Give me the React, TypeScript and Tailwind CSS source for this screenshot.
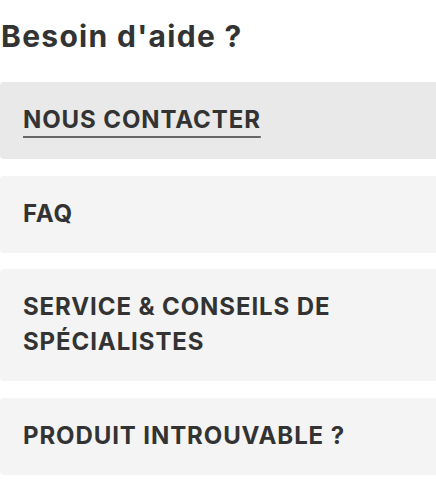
export default function App() {
  const items = [
    { label: "NOUS CONTACTER", active: true },
    { label: "FAQ" },
    { label: "SERVICE & CONSEILS DE SPÉCIALISTES" },
    { label: "PRODUIT INTROUVABLE ?" },
  ];
  return (
    <div className="w-[436px] h-[488px] bg-white overflow-hidden text-[#333333] font-['Inter',sans-serif]">
      <h2 className="pt-[19px] pl-[1px] text-[30px] leading-[35px] font-bold tracking-[1.3px]">
        Besoin d'aide ?
      </h2>
      <div className="mt-[28px] flex flex-col gap-[16.5px]">
        {items.map((it) => (
          <a
            key={it.label}
            className={`block rounded-l-[4px] pl-[23px] pr-[60px] pt-[20px] pb-[22px] text-[24px] leading-[35px] font-bold uppercase tracking-[0.9px] ${
              it.active ? "bg-[#e9e9e9]" : "bg-[#f4f4f4]"
            }`}
          >
            <span
              className={
                it.active
                  ? "underline decoration-[#666666] decoration-[2px] underline-offset-[8px]"
                  : ""
              }
            >
              {it.label}
            </span>
          </a>
        ))}
      </div>
    </div>
  );
}
